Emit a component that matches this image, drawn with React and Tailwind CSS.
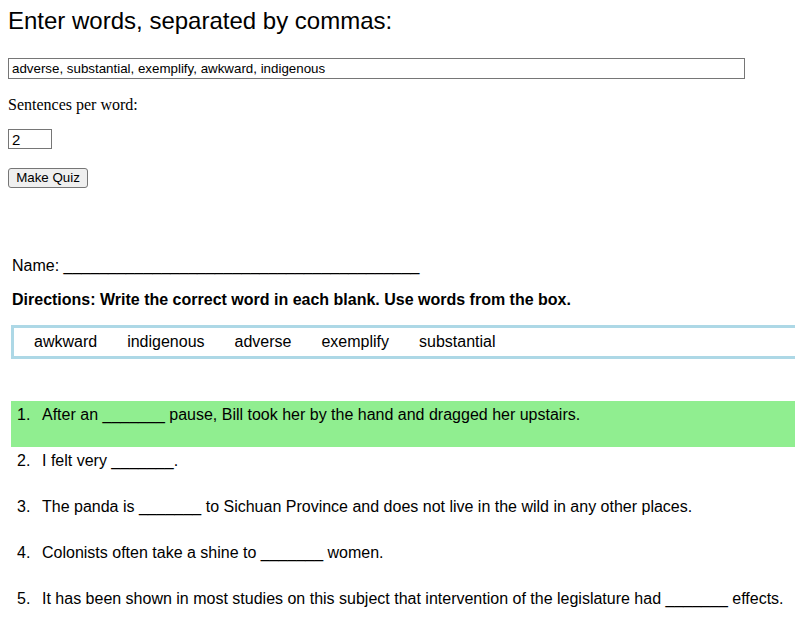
import { useState } from 'react'

const WORDS = ['awkward', 'indigenous', 'adverse', 'exemplify', 'substantial']

const BLANK = '_______'

const SENTENCES = [
  ['After an ', ' pause, Bill took her by the hand and dragged her upstairs.'],
  ['I felt very ', '.'],
  ['The panda is ', ' to Sichuan Province and does not live in the wild in any other places.'],
  ['Colonists often take a shine to ', ' women.'],
  ['It has been shown in most studies on this subject that intervention of the legislature had ', ' effects.'],
]

const App = () => {
  const [words, setWords] = useState('adverse, substantial, exemplify, awkward, indigenous')
  const [count, setCount] = useState('2')

  return (
    <div className="min-h-screen bg-white text-black overflow-hidden" style={{ fontFamily: '"Liberation Sans", Arial, sans-serif' }}>
      <div className="px-2">
        <h2 className="pt-[7px] text-[24px] leading-[28px] font-normal">Enter words, separated by commas:</h2>
        <input
          value={words}
          onChange={e => setWords(e.target.value)}
          className="mt-[23px] block w-[737px] h-[21px] px-[3px] border border-[#767676] text-[13.33px] leading-none outline-none"
        />
        <p className="mt-[17px] h-[18px] leading-[18px] text-[16px]" style={{ fontFamily: '"Liberation Serif", "Times New Roman", serif' }}>
          Sentences per word:
        </p>
        <input
          value={count}
          onChange={e => setCount(e.target.value)}
          className="mt-[15px] block w-[44px] h-[20px] px-[3px] border border-[#767676] text-[15px] leading-none outline-none"
        />
        <button className="mt-[19px] block w-[80px] h-[20px] bg-[#efefef] border border-[#767676] rounded-[3px] text-[13.33px] leading-none">
          Make Quiz
        </button>
      </div>

      <div className="pl-[11px] mt-[69px] text-[16px]">
        <p className="leading-[18px] pl-px">Name: ________________________________________</p>
        <p className="mt-[16px] leading-[18px] font-bold pl-px">Directions: Write the correct word in each blank. Use words from the box.</p>
        <div className="mt-[16px] h-[34px] border-[3px] border-r-0 border-[#add8e6] flex items-center pl-[5px]">
          {WORDS.map(w => (
            <span key={w} className="px-[15px] leading-[18px]">{w}</span>
          ))}
        </div>
        <ol className="mt-[42px]">
          {SENTENCES.map(([a, b], i) => (
            <li key={i} className={`flex h-[46px] pt-[5px] leading-[18px] ${i === 0 ? 'bg-[#90ee90]' : ''}`}>
              <span className="w-[31px] pl-[6px]">{i + 1}.</span>
              <span className="whitespace-nowrap">{a}{BLANK}{b}</span>
            </li>
          ))}
        </ol>
      </div>
    </div>
  )
}

export default App
